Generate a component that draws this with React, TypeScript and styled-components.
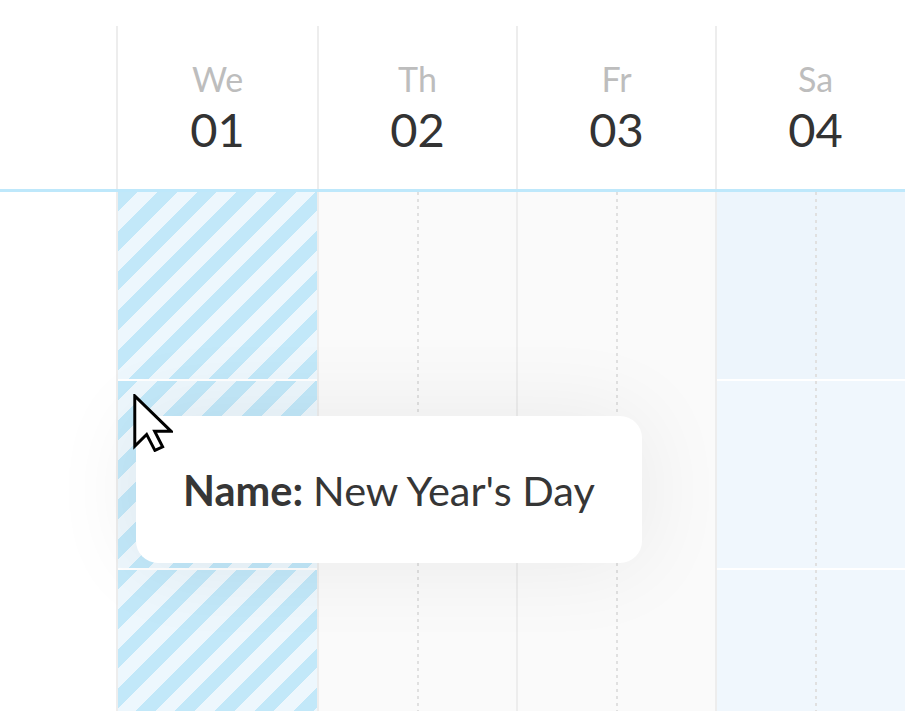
import styled, { createGlobalStyle, css } from 'styled-components';

type DayKind = 'holiday' | 'work' | 'weekend';

interface IDay {
  name: string;
  date: string;
  kind: DayKind;
}

const DAYS: IDay[] = [
  { name: 'We', date: '01', kind: 'holiday' },
  { name: 'Th', date: '02', kind: 'work' },
  { name: 'Fr', date: '03', kind: 'work' },
  { name: 'Sa', date: '04', kind: 'weekend' },
];

const SLOTS = [0, 1, 2];
const COLUMNS = '116px 201px 199px 199px 199px';

const GlobalStyle = createGlobalStyle`
  html, body {
    margin: 0;
    padding: 0;
    background: #ffffff;
  }
  body {
    font-family: Lato, 'Open Sans', sans-serif;
  }
`;

const Scheduler = styled.div`
  position: relative;
  width: 905px;
  height: 711px;
  overflow: hidden;
  background: #ffffff;
`;

const Header = styled.div`
  display: grid;
  grid-template-columns: ${COLUMNS};
  padding-top: 26px;
  border-bottom: 3px solid #bee8fb;
`;

const Corner = styled.div``;

const HeaderCell = styled.div`
  height: 163px;
  border-left: 2px solid #ededed;
  display: flex;
  flex-direction: column;
  align-items: center;
  padding-top: 33px;
  box-sizing: border-box;
`;

const DayName = styled.div`
  font-size: 34px;
  line-height: 40px;
  color: #bdbdbd;
`;

const DayDate = styled.div`
  font-size: 47px;
  line-height: 56px;
  margin-top: 2px;
  color: #333333;
`;

const Body = styled.div`
  display: grid;
  grid-template-columns: ${COLUMNS};
  height: 519px;
`;

const TimeColumn = styled.div`
  background: #ffffff;
`;

const DayColumn = styled.div`
  border-left: 2px solid #ededed;
  display: flex;
  flex-direction: column;
  gap: 2px;
  background: #ffffff;
`;

const dotted = css`
  background-image: linear-gradient(#e0e0e0 0 3px, transparent 3px 7px);
  background-size: 2px 7px;
  background-repeat: repeat-y;
  background-position: center top;
`;

const Slot = styled.div<{ $kind: DayKind; $row: number }>`
  height: 187px;
  flex-shrink: 0;
  ${(p) =>
    p.$kind === 'holiday' &&
    css`
      background: repeating-linear-gradient(
        135deg,
        #c2e8f9 0 14px,
        #edf7fd 14px 28px
      );
    `}
  ${(p) =>
    p.$kind === 'work' &&
    css`
      ${dotted};
      background-color: #fafafa;
      margin-bottom: -2px;
      height: 189px;
    `}
  ${(p) =>
    p.$kind === 'weekend' &&
    css`
      ${dotted};
      background-color: ${p.$row === 0 ? '#edf5fc' : '#f0f7fd'};
    `}
`;

const Tooltip = styled.div`
  position: absolute;
  left: 136px;
  top: 416px;
  width: 506px;
  height: 147px;
  box-sizing: border-box;
  padding-left: 47px;
  display: flex;
  align-items: center;
  background: #ffffff;
  border-radius: 22px;
  box-shadow: 0 0 90px rgba(0, 0, 0, 0.07);
  font-size: 41.5px;
  color: #363636;
  white-space: nowrap;
`;

const Label = styled.b`
  font-weight: 700;
  margin-right: 10px;
`;

const Pointer = styled.svg`
  position: absolute;
  left: 133px;
  top: 394px;
  width: 40px;
  height: 58px;
`;

export default function App() {
  return (
    <>
      <GlobalStyle />
      <Scheduler>
        <Header>
          <Corner />
          {DAYS.map((day) => (
            <HeaderCell key={day.date}>
              <DayName>{day.name}</DayName>
              <DayDate>{day.date}</DayDate>
            </HeaderCell>
          ))}
        </Header>
        <Body>
          <TimeColumn />
          {DAYS.map((day) => (
            <DayColumn key={day.date}>
              {SLOTS.map((row) => (
                <Slot key={row} $kind={day.kind} $row={row} />
              ))}
            </DayColumn>
          ))}
        </Body>
        <Tooltip>
          <Label>Name:</Label>New Year's Day
        </Tooltip>
        <Pointer viewBox="0 0 13.5 19.5">
          <path
            d="M0.6 0.6 L0.6 17.6 L4.6 13.6 L7.4 19 L10 17.8 L7.3 12.5 L12.8 12.5 Z"
            fill="#ffffff"
            stroke="#000000"
            strokeWidth="1"
            strokeLinejoin="miter"
          />
        </Pointer>
      </Scheduler>
    </>
  );
}
